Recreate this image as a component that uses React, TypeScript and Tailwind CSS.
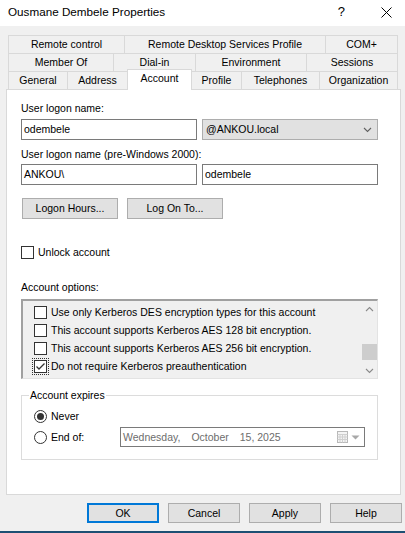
import React from "react";

function Check({ checked = false, focus = false }: { checked?: boolean; focus?: boolean }) {
  return (
    <span
      className={
        "relative flex h-[13px] w-[13px] shrink-0 items-center justify-center border border-[#333333] bg-white" +
        (focus ? " outline-1 outline-dotted outline-offset-[1px] outline-[#333333]" : "")
      }
    >
      {checked && (
        <svg width="11" height="11" viewBox="0 0 11 11">
          <path d="M1.5 5.5 L4 8 L9.5 2.5" stroke="#333333" strokeWidth="1.3" fill="none" />
        </svg>
      )}
    </span>
  );
}

function Radio({ checked = false }: { checked?: boolean }) {
  return (
    <span className="flex h-[13px] w-[13px] shrink-0 items-center justify-center rounded-full border border-[#333333] bg-white">
      {checked && <span className="h-[7px] w-[7px] rounded-full bg-[#333333]" />}
    </span>
  );
}

function Chevron({ up = false, color = "#606060" }: { up?: boolean; color?: string }) {
  return (
    <svg width="9" height="6" viewBox="0 0 9 6">
      <path d={up ? "M1 5 L4.5 1.5 L8 5" : "M1 1 L4.5 4.5 L8 1"} stroke={color} strokeWidth="1.1" fill="none" />
    </svg>
  );
}

const tab = "flex h-[18px] items-center justify-center border-t border-l border-[#d9d9d9] bg-[#f0f0f0]";

export default function App() {
  return (
    <div className="flex h-[533px] w-[405px] flex-col overflow-hidden bg-[#f0f0f0] font-['Liberation_Sans',Arial,sans-serif] text-[10.5px] leading-[13px] text-black">
      {/* Title bar */}
      <div className="flex h-[26px] shrink-0 items-start bg-white">
        <div className="pl-[8px] pt-[4px] text-[11.7px] leading-[15px]">Ousmane Dembele Properties</div>
        <div className="ml-auto flex items-start">
          <span className="pt-[4px] text-[13px] leading-[16px]">?</span>
          <span className="ml-[36px] mr-[13px] pt-[7px]">
            <svg width="11" height="11" viewBox="0 0 11 11">
              <path d="M0.5 0.5 L10.5 10.5 M10.5 0.5 L0.5 10.5" stroke="#000" strokeWidth="1" />
            </svg>
          </span>
        </div>
      </div>

      {/* Body */}
      <div className="flex flex-col px-[6px] pt-[9px]">
        {/* Tabs */}
        <div className="ml-[2px] flex w-[390px] flex-col">
          <div className="flex">
            <div className={tab + " w-[116px]"}>Remote control</div>
            <div className={tab + " w-[201px]"}>Remote Desktop Services Profile</div>
            <div className={tab + " w-[73px] border-r"}>COM+</div>
          </div>
          <div className="flex">
            <div className={tab + " w-[105px]"}>Member Of</div>
            <div className={tab + " w-[82px]"}>Dial-in</div>
            <div className={tab + " w-[111px]"}>Environment</div>
            <div className={tab + " w-[92px] border-r"}>Sessions</div>
          </div>
          <div className="flex h-[18px] items-start">
            <div className={tab + " w-[59px]"}>General</div>
            <div className={tab + " w-[60px]"}>Address</div>
            <div className="relative z-10 -mr-[1px] -mt-[2px] flex h-[21px] w-[65px] justify-center border-t border-l border-r border-[#d9d9d9] bg-white pt-[2px]">
              Account
            </div>
            <div className={tab + " w-[50px]"}>Profile</div>
            <div className={tab + " w-[78px]"}>Telephones</div>
            <div className={tab + " w-[79px] border-r"}>Organization</div>
          </div>
        </div>

        {/* Panel */}
        <div className="flex h-[406px] w-[395px] flex-col border border-[#d9d9d9] bg-white pl-[14px]">
          <div className="mt-[12px]">User logon name:</div>
          <div className="mt-[4px] flex gap-[5px]">
            <div className="flex h-[21px] w-[176px] items-center border border-[#7a7a7a] bg-white px-[2px]">odembele</div>
            <div className="flex h-[21px] w-[176px] items-center border border-[#adadad] bg-[#e1e1e1] pl-[3px] pr-[5px]">
              <span>@ANKOU.local</span>
              <span className="ml-auto flex">
                <Chevron />
              </span>
            </div>
          </div>
          <div className="mt-[8px]">User logon name (pre-Windows 2000):</div>
          <div className="mt-[3px] flex gap-[5px]">
            <div className="flex h-[21px] w-[176px] items-center border border-[#7a7a7a] bg-white px-[2px]">ANKOU\</div>
            <div className="flex h-[21px] w-[176px] items-center border border-[#7a7a7a] bg-white px-[2px]">odembele</div>
          </div>
          <div className="ml-[1px] mt-[13px] flex gap-[9px]">
            <div className="flex h-[21px] w-[96px] items-center justify-center border border-[#adadad] bg-[#e1e1e1]">Logon Hours...</div>
            <div className="flex h-[21px] w-[96px] items-center justify-center border border-[#adadad] bg-[#e1e1e1]">Log On To...</div>
          </div>
          <div className="mt-[27px] flex items-center gap-[4px]">
            <Check />
            <span>Unlock account</span>
          </div>
          <div className="mt-[22px]">Account options:</div>
          <div className="mt-[5px] flex h-[80px] w-[357px] border-t-2 border-l-2 border-r border-b border-t-[#a0a0a0] border-l-[#a0a0a0] border-r-[#e3e3e3] border-b-[#e3e3e3] bg-[#f0f0f0]">
            <div className="flex flex-1 flex-col pl-[11px] pt-[2px]">
              <div className="flex h-[18px] items-center gap-[4px]">
                <Check />
                <span>Use only Kerberos DES encryption types for this account</span>
              </div>
              <div className="flex h-[18px] items-center gap-[4px]">
                <Check />
                <span>This account supports Kerberos AES 128 bit encryption.</span>
              </div>
              <div className="flex h-[18px] items-center gap-[4px]">
                <Check />
                <span>This account supports Kerberos AES 256 bit encryption.</span>
              </div>
              <div className="flex h-[19px] items-center gap-[4px]">
                <Check checked focus />
                <span>Do not require Kerberos preauthentication</span>
              </div>
            </div>
            <div className="flex w-[15px] flex-col items-center">
              <div className="flex h-[16px] items-center justify-center">
                <Chevron up color="#8a8a8a" />
              </div>
              <div className="mt-[27px] h-[16px] w-[15px] bg-[#cdcdcd]" />
              <div className="mt-auto flex h-[14px] items-center justify-center">
                <Chevron color="#8a8a8a" />
              </div>
            </div>
          </div>

          <fieldset className="mt-[10px] h-[71px] w-[357px] border border-[#dcdcdc]">
            <legend className="ml-[7px] px-[1px] text-[10.5px] leading-[13px]">Account expires</legend>
            <div className="flex flex-col pl-[12px]">
              <div className="mt-[8px] flex items-center gap-[4px]">
                <Radio checked />
                <span>Never</span>
              </div>
              <div className="mt-[4px] flex h-[20px] items-center">
                <div className="flex w-[86px] items-center gap-[4px]">
                  <Radio />
                  <span>End of:</span>
                </div>
                <div className="flex h-[20px] w-[245px] items-center border border-[#7a7a7a] bg-white pl-[2px] pr-[4px] text-[#6d6d6d]">
                  <span>Wednesday,</span>
                  <span className="ml-[11px]">October</span>
                  <span className="ml-[11px]">15, 2025</span>
                  <span className="ml-auto flex items-center gap-[3px]">
                    <svg width="11" height="12" viewBox="0 0 11 12">
                      <rect x="0.5" y="0.5" width="10" height="11" fill="#f4f4f4" stroke="#b8b8b8" />
                      <path d="M0.5 3.5 H10.5 M0.5 6 H10.5 M0.5 8.5 H10.5 M3 3.5 V11.5 M5.5 3.5 V11.5 M8 3.5 V11.5" stroke="#d0d0d0" strokeWidth="1" />
                    </svg>
                    <svg width="9" height="5" viewBox="0 0 9 5">
                      <path d="M0.5 0.5 H8.5 L4.5 4.5 Z" fill="#a8a8a8" />
                    </svg>
                  </span>
                </div>
              </div>
            </div>
          </fieldset>
        </div>

        {/* Buttons */}
        <div className="mt-[8px] flex justify-end gap-[9px]">
          <div className="flex h-[20px] w-[72px] items-center justify-center border-2 border-[#0078d7] bg-[#e1e1e1]">OK</div>
          <div className="flex h-[20px] w-[72px] items-center justify-center border border-[#adadad] bg-[#e1e1e1]">Cancel</div>
          <div className="flex h-[20px] w-[72px] items-center justify-center border border-[#adadad] bg-[#e1e1e1]">Apply</div>
          <div className="-mr-[3px] flex h-[20px] w-[72px] items-center justify-center border border-[#adadad] bg-[#e1e1e1]">Help</div>
        </div>
      </div>
      <div className="mt-auto h-[2px] w-full bg-[#1d4f73]" />
    </div>
  );
}
